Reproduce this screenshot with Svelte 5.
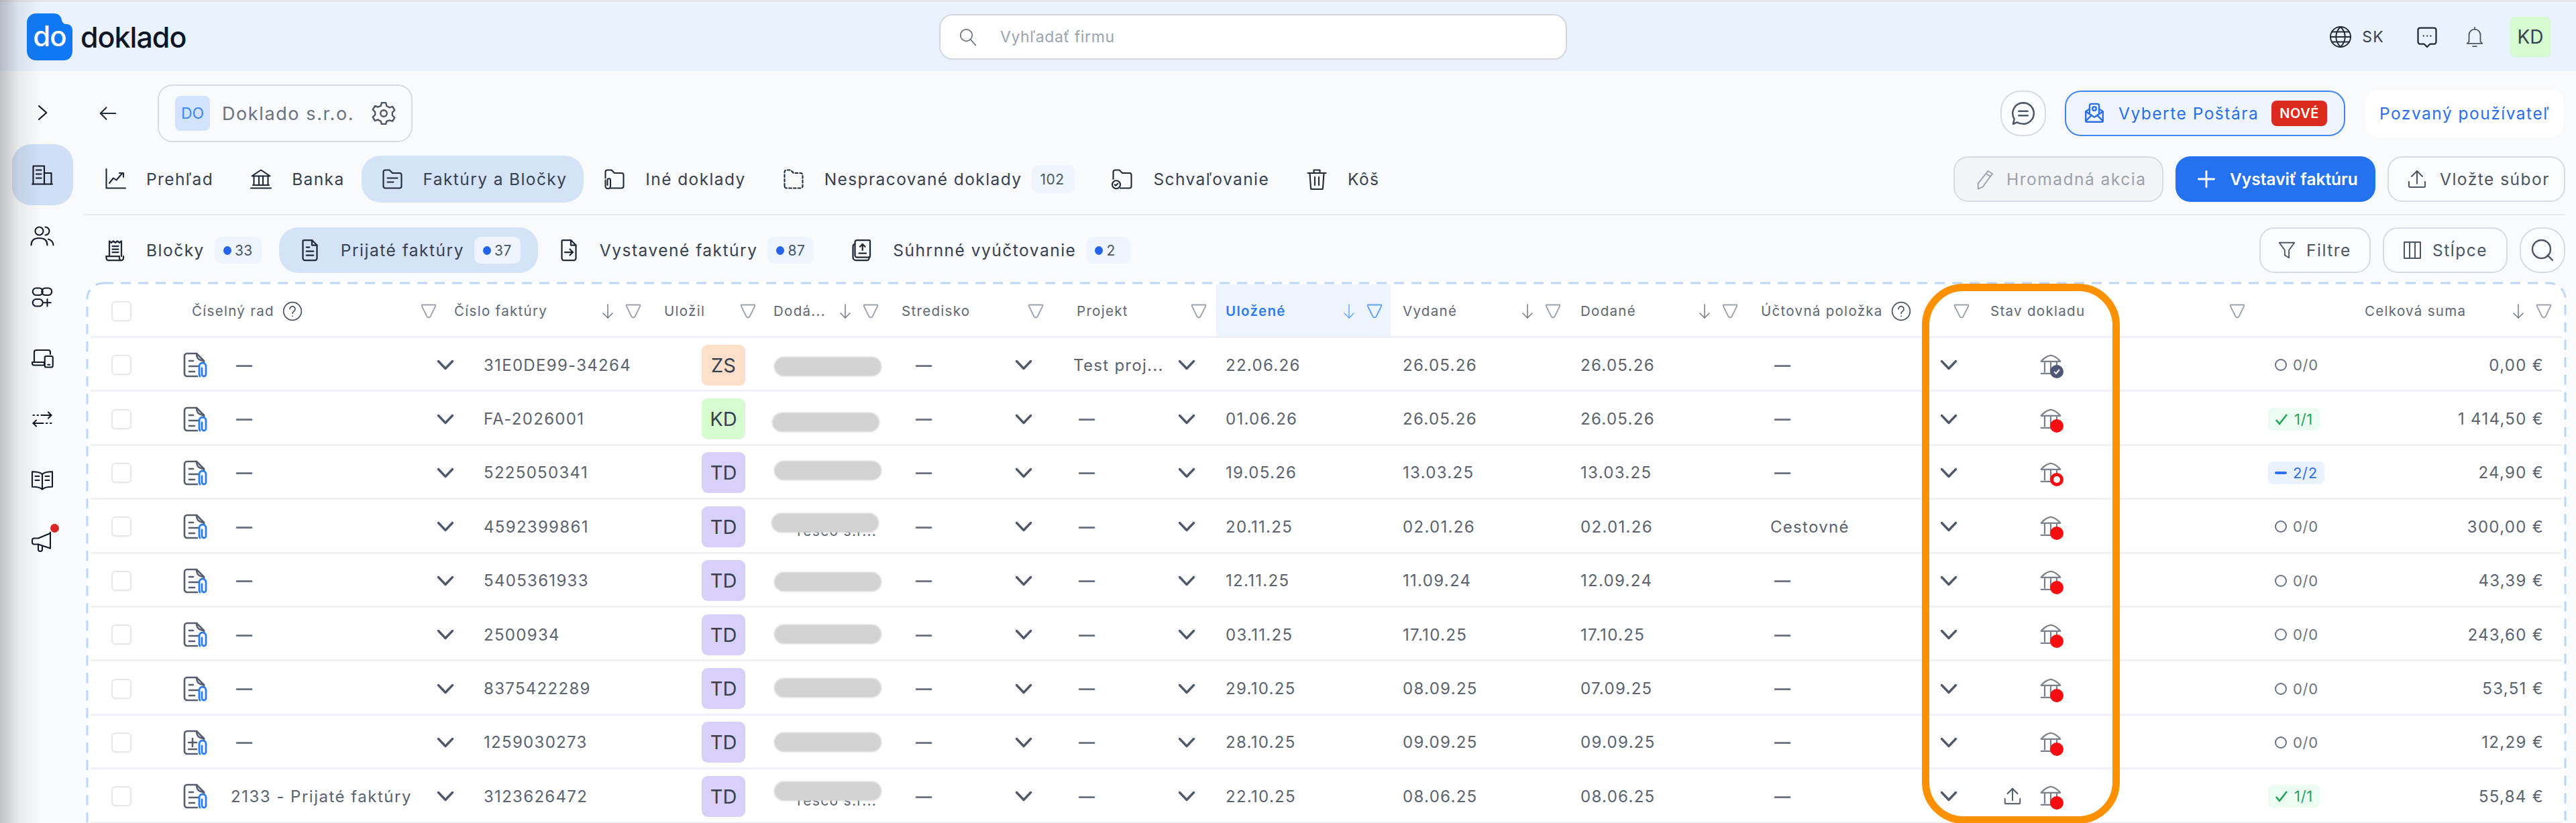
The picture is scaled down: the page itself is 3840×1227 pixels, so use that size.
<script>
  const ICONS = {
    chevronRight: ["M8 4l9 8-9 8"],
    arrowLeft: ["M21 12H3", "M10 5l-7 7 7 7"],
    building: ["M3 21V3h11v18", "M14 10h7v11", "M2 21h20", "M6 7h5", "M6 11h5", "M6 15h5"],
    users: ["M5 7a4 4 0 1 0 8 0a4 4 0 1 0-8 0", "M1 21c0-5 3-7 8-7s8 2 8 7", "M15 3a4 4 0 0 1 0 8", "M18 15c3 1 5 3 5 6"],
    apps: ["M6 3h3a3.500 3.500 0 0 1 0 7H6a3.500 3.500 0 0 1 0-7z", "M15 3h3a3.500 3.500 0 0 1 0 7h-3a3.500 3.500 0 0 1 0-7z", "M6 14h3a3.500 3.500 0 0 1 0 7H6a3.500 3.500 0 0 1 0-7z", "M17 14v7", "M13.500 17.500h7"],
    devices: ["M4 16V6a2 2 0 0 1 2-2h12a2 2 0 0 1 2 2v2", "M2 16h12v3H4a2 2 0 0 1-2-2z", "M16 10h5a1.500 1.500 0 0 1 1.500 1.500v8a1.500 1.500 0 0 1-1.500 1.500h-5a1.500 1.500 0 0 1-1.500-1.500v-8a1.500 1.500 0 0 1 1.500-1.500z", "M17.500 18.500h2"],
    swap: ["M3 8h1", "M7 8h1", "M11 8h10", "M18 5l3 3-3 3", "M3 16h10", "M6 13l-3 3 3 3", "M16 16h1", "M20 16h1"],
    book: ["M12 6C10 4 6 3.500 2 3.500v15c4 0 8 .5 10 2.500 2-2 6-2.500 10-2.500v-15C18 3.500 14 4 12 6z", "M12 6v15", "M5 8h4", "M5 12h4", "M15 8h4", "M15 12h4"],
    mega: ["M20 3v16", "M20 4L8 9H4a2 2 0 0 0-2 2v2a2 2 0 0 0 2 2h4l12 4", "M8 15v5a2 2 0 0 0 4 0v-3.500"],
    chart: ["M3 2v19h19", "M6 16l4-5 3 2 6-7", "M16 6h4v4"],
    bank: ["M3 9l9-6 9 6z", "M5 9v9", "M10 9v9", "M14 9v9", "M19 9v9", "M4 18h16", "M2 21h20"],
    bankDome: ["M2.500 8.500C5 5.500 9 3 12 2.500c3 .5 7 3 9.500 6z", "M6 9v10", "M12 9v10", "M18 9v10", "M2.500 20.500h19"],
    folderDoc: ["M3 5a2 2 0 0 1 2-2h4l3 3h7a2 2 0 0 1 2 2v11a2 2 0 0 1-2 2H5a2 2 0 0 1-2-2z", "M7 11h10", "M7 15h6"],
    folderClip: ["M8 21h11a2 2 0 0 0 2-2V8a2 2 0 0 0-2-2h-7L9 3H5a2 2 0 0 0-2 2v6", "M3 13v6a2.500 2.500 0 0 0 5 0v-6a1.500 1.500 0 0 0-3 0v5"],
    folderDash: ["M3 19V5a2 2 0 0 1 2-2h4l3 3h7a2 2 0 0 1 2 2v11a2 2 0 0 1-2 2H5a2 2 0 0 1-2-2z"],
    folderCheck: ["M10 21h9a2 2 0 0 0 2-2V8a2 2 0 0 0-2-2h-7L9 3H5a2 2 0 0 0-2 2v7", "M2 17.500a4 4 0 1 0 8 0a4 4 0 1 0-8 0", "M4.500 17.500l1 1 2-2"],
    trash: ["M3 6h18", "M9 6V3h6v3", "M5 6l1 15a1 1 0 0 0 1 1h10a1 1 0 0 0 1-1l1-15", "M10 10v8", "M14 10v8"],
    receipt: ["M6 18V3l2 1.500L10 3l2 1.500L14 3l2 1.500L18 3v15", "M3 18h13v2a2 2 0 0 0 4 0V18", "M5 22h13", "M3 18v2a2 2 0 0 0 2 2", "M9 8h6", "M9 11h6", "M9 14h6"],
    docLines: ["M6 2h8l5 5v13a2 2 0 0 1-2 2H7a2 2 0 0 1-2-2V3a1 1 0 0 1 1-1z", "M14 2v5h5", "M8.500 9h3", "M8.500 13h7", "M8.500 17h7"],
    docArrow: ["M6 2h8l5 5v13a2 2 0 0 1-2 2H7a2 2 0 0 1-2-2V3a1 1 0 0 1 1-1z", "M14 2v5h5", "M8 14h8", "M13 11l3 3-3 3"],
    summary: ["M7 2h12a1 1 0 0 1 1 1v15a1 1 0 0 1-1 1H7a2 2 0 0 1-2-2V4a2 2 0 0 1 2-2z", "M5 6a2 2 0 0 0-2 2v11a3 3 0 0 0 3 3h11a2 2 0 0 0 2-2v-1", "M12.500 12V6", "M10 8.500l2.500-2.500 2.500 2.500", "M9 15h7"],
    search: ["M3 10a7 7 0 1 0 14 0a7 7 0 1 0-14 0", "M15 15l6 7"],
    searchWide: ["M2 11a9 9 0 1 0 18 0a9 9 0 1 0-18 0", "M17 17l5 5"],
    gear: ["M10 2h4l.7 3 2.600 1.500 3-.9 2 3.400-2.200 2.100v2.800l2.200 2.100-2 3.400-3-.9L14.700 19.500 14 22h-4l-.7-2.500-2.600-1.500-3 .9-2-3.400 2.200-2.100v-2.800L1.700 8.500l2-3.400 3 .9L9.300 5z", "M9 12a3 3 0 1 0 6 0a3 3 0 1 0-6 0"],
    globe: ["M2 12a10 10 0 1 0 20 0a10 10 0 1 0-20 0", "M2 12h20", "M3.500 7h17", "M3.500 17h17", "M12 2c-6 6-6 14 0 20", "M12 2c6 6 6 14 0 20"],
    chatDots: ["M5 3h14a2 2 0 0 1 2 2v12a2 2 0 0 1-2 2h-4l-3 3-3-3H5a2 2 0 0 1-2-2V5a2 2 0 0 1 2-2z", "M8.500 11h.1", "M12 11h.1", "M15.500 11h.1"],
    bell: ["M6 17V10a6 6 0 0 1 12 0v7l2 2H4z", "M10 22h4", "M12 2v2"],
    comment: ["M12 2.500a9.500 9.500 0 0 1 0 19c-2 0-4-.5-5.500-1.500L3 21.500l1-4.500A9.500 9.500 0 0 1 12 2.500z", "M8 10h8", "M8 14h8"],
    mail: ["M3 10v10a1 1 0 0 0 1 1h16a1 1 0 0 0 1-1V10l-3-2", "M6 8l-3 2 9 6 9-6", "M3 20l6-6", "M21 20l-6-6", "M7 12V4a2 2 0 0 1 2-2h6a2 2 0 0 1 2 2v8", "M10 7a2 2 0 1 0 4 0a2 2 0 1 0-4 0"],
    pencil: ["M16 3l5 3-11 15-5 2 0-6z", "M14 6l5 3"],
    plus: ["M12 2v20", "M2 12h20"],
    upload: ["M12 17V3", "M6 9l6-6 6 6", "M3 15v5a1 1 0 0 0 1 1h16a1 1 0 0 0 1-1v-5"],
    funnel: ["M3 3h18l-6.500 9v9l-5-3v-6z"],
    columns: ["M3 3h18v18H3z", "M9 3v18", "M15 3v18"],
    sort: ["M12 2v20", "M5 15l7 7 7-7"],
    help: ["M2 12a10 10 0 1 0 20 0a10 10 0 1 0-20 0", "M9 9.500a3 3 0 1 1 4.500 2.600c-1 .6-1.500 1.200-1.500 2.400", "M12 17.500h.1"]
  };

  const sideItems = ["building", "users", "apps", "devices", "swap", "book", "mega"];

  const navItems = [
    { icon: "chart", label: "Prehľad" },
    { icon: "bank", label: "Banka" },
    { icon: "folderDoc", label: "Faktúry a Bločky", active: true },
    { icon: "folderClip", label: "Iné doklady" },
    { icon: "folderDash", label: "Nespracované doklady", count: "102" },
    { icon: "folderCheck", label: "Schvaľovanie" },
    { icon: "trash", label: "Kôš" }
  ];

  const tabs = [
    { icon: "receipt", label: "Bločky", count: "33" },
    { icon: "docLines", label: "Prijaté faktúry", count: "37", active: true },
    { icon: "docArrow", label: "Vystavené faktúry", count: "87" },
    { icon: "summary", label: "Súhrnné vyúčtovanie", count: "2" }
  ];

  const heads = [
    { check: true, pl: 31 },
    { label: "Číselný rad", help: true, filter: true, pr: 26 },
    { label: "Číslo faktúry", sort: true, filter: true, pr: 34 },
    { label: "Uložil", filter: true, pr: 26 },
    { label: "Dodá...", sort: true, filter: true, pr: 34 },
    { label: "Stredisko", filter: true, pr: 49 },
    { label: "Projekt", filter: true, pr: 14 },
    { label: "Uložené", sort: true, filter: true, pr: 12, pl: 14, on: true },
    { label: "Vydané", sort: true, filter: true, pr: 29, pl: 18 },
    { label: "Dodané", sort: true, filter: true, pr: 34 },
    { label: "Účtovná položka", help: true },
    { label: "Stav dokladu", filterFirst: true },
    { filterFirst: true },
    { label: "Celková suma", sort: true, filter: true, pr: 15 }
  ];

  const rows = [
    { no: "31E0DE99-34264", by: "ZS", pill: [0, 2], project: "Test proj...", saved: "22.06.26", issued: "26.05.26", due: "26.05.26", state: "check", pay: "0/0", sum: "0,00 €" },
    { no: "FA-2026001", by: "KD", pill: [-3, 5], saved: "01.06.26", issued: "26.05.26", due: "26.05.26", state: "dot", pay: "1/1", sum: "1 414,50 €" },
    { no: "5225050341", by: "TD", pill: [0, -3], saved: "19.05.26", issued: "13.03.25", due: "13.03.25", state: "ring", pay: "2/2", sum: "24,90 €" },
    { no: "4592399861", by: "TD", pill: [-4, -6], under: true, saved: "20.11.25", issued: "02.01.26", due: "02.01.26", item: "Cestovné", state: "dot", pay: "0/0", sum: "300,00 €" },
    { no: "5405361933", by: "TD", pill: [0, 2], saved: "12.11.25", issued: "11.09.24", due: "12.09.24", state: "dot", pay: "0/0", sum: "43,39 €" },
    { no: "2500934", by: "TD", pill: [0, -1], saved: "03.11.25", issued: "17.10.25", due: "17.10.25", state: "dot", pay: "0/0", sum: "243,60 €" },
    { no: "8375422289", by: "TD", pill: [0, -1], saved: "29.10.25", issued: "08.09.25", due: "07.09.25", state: "dot", pay: "0/0", sum: "53,51 €" },
    { no: "1259030273", by: "TD", pill: [0, 0], plusDoc: true, saved: "28.10.25", issued: "09.09.25", due: "09.09.25", state: "dot", pay: "0/0", sum: "12,29 €" },
    { no: "3123626472", by: "TD", pill: [0, -8], under: true, seq: "2133 - Prijaté faktúry", saved: "22.10.25", issued: "08.06.25", due: "08.06.25", upload: true, state: "dot", pay: "1/1", sum: "55,84 €" }
  ];
</script>

{#snippet icon(name, size = 24, width = 1.5)}
  <svg class="icon" width={size} height={size} viewBox="0 0 24 24" fill="none" stroke="currentColor" stroke-width={width} stroke-linecap="round" stroke-linejoin="round" stroke-dasharray={name === "folderDash" ? "2.5 2" : undefined}>
    {#each ICONS[name] as d}<path {d} />{/each}
  </svg>
{/snippet}

{#snippet chevron()}
  <svg class="chev" width="26" height="16" viewBox="0 0 26 16" fill="none" stroke="currentColor" stroke-width="3.400" stroke-linecap="round" stroke-linejoin="round"><path d="M2.500 2.500L13 13.500 23.500 2.500" /></svg>
{/snippet}

{#snippet docIcon(plus)}
  <svg class="doc" width="36" height="38" viewBox="0 0 36 38" fill="none" stroke-linecap="round" stroke-linejoin="round">
    <g stroke="#565d6d" stroke-width="2.600">
      <path d="M21 36H6a4 4 0 0 1-4-4V6a4 4 0 0 1 4-4h14l11 11v3" />
      <path d="M20 2c0 5 1 10 11 11" />
      {#if plus}
        <path d="M14 13v12M8 19h12M8 29h12" />
      {:else}
        <path d="M9 13h6M9 21h13M9 29h8" />
      {/if}
    </g>
    <path d="M26 23v9a3 3 0 0 0 6 0v-12a5 5 0 0 0-10 0v12a8 8 0 0 0 1 3" stroke="#2b7bf2" stroke-width="2.800" transform="translate(2 1)" />
  </svg>
{/snippet}

{#snippet funnel(on)}
  <span class="funnel" class:on>
    <svg width="24" height="24" viewBox="0 0 24 24" fill="none" stroke="currentColor" stroke-width="1.800" stroke-linejoin="round"><path d="M2.500 2.500h19c1 0 1 1 .6 2L15 19c-1 3-5 3-6 0L1.900 4.500c-.4-1 -.4-2 .6-2z" /></svg>
  </span>
{/snippet}

<div class="app">
  <header class="topbar">
    <div class="brand">
      <svg width="68" height="70" viewBox="0 0 68 70">
        <path d="M14 0h26c7 0 11 4 12 10 1 4 4 6 7 6 6 0 9 4 9 10v30c0 8-5 14-13 14H14C6 70 0 64 0 56V14C0 6 6 0 14 0z" fill="#0f78f4" />
        <text x="34" y="49" text-anchor="middle" class="logomark">do</text>
      </svg>
      <span class="wordmark">doklado</span>
    </div>
    <div class="searchbox">
      {@render icon("search", 30, 1.4)}
      <span>Vyhľadať firmu</span>
    </div>
    <div class="usermenu">
      <span class="lang">{@render icon("globe", 36, 1.3)}<b>SK</b></span>
      <span class="tool">{@render icon("chatDots", 36, 1.5)}</span>
      <span class="tool bell">{@render icon("bell", 34, 1.3)}</span>
      <span class="me">KD</span>
    </div>
  </header>

  <div class="shell">
    <nav class="sidebar">
      <span class="toggle">{@render icon("chevronRight", 30, 1.8)}</span>
      {#each sideItems as name, i}
        <span class="sideitem" class:active={i === 0}>
          {@render icon(name, 36, 1.4)}
          {#if name === "mega"}<i class="alert"></i>{/if}
        </span>
      {/each}
    </nav>

    <main class="content">
      <div class="firmrow">
        <span class="back">{@render icon("arrowLeft", 30, 1.6)}</span>
        <div class="firm">
          <span class="firmlogo">DO</span>
          <span class="firmname">Doklado s.r.o.</span>
          {@render icon("gear", 38, 1.5)}
        </div>
        <div class="firmactions">
          <button class="ghost round">{@render icon("comment", 40, 1.5)}</button>
          <button class="postar">{@render icon("mail", 34, 1.7)}<span>Vyberte Poštára</span><em>NOVÉ</em></button>
          <button class="invite">Pozvaný používateľ</button>
        </div>
      </div>

      <div class="navrow">
        {#each navItems as item}
          <span class="navitem" class:active={item.active}>
            {@render icon(item.icon, 36, 1.4)}
            <span>{item.label}</span>
            {#if item.count}<b class="count plain">{item.count}</b>{/if}
          </span>
        {/each}
        <div class="navactions">
          <button class="ghost bulk">{@render icon("pencil", 32, 1.4)}<span>Hromadná akcia</span></button>
          <button class="primary">{@render icon("plus", 28, 2.4)}<span>Vystaviť faktúru</span></button>
          <button class="ghost upfile">{@render icon("upload", 32, 1.5)}<span>Vložte súbor</span></button>
        </div>
      </div>

      <div class="divider"></div>

      <div class="tabrow">
        {#each tabs as tab}
          <span class="navitem" class:active={tab.active}>
            {@render icon(tab.icon, 36, 1.5)}
            <span>{tab.label}</span>
            <b class="count"><i></i>{tab.count}</b>
          </span>
        {/each}
        <div class="tabtools">
          <button class="ghost filters">{@render icon("funnel", 30, 1.5)}<span>Filtre</span></button>
          <button class="ghost cols">{@render icon("columns", 32, 1.5)}<span>Stĺpce</span></button>
          <button class="ghost round">{@render icon("searchWide", 36, 1.6)}</button>
        </div>
      </div>

      <section class="tablewrap">
        <svg class="dashes" width="3700" height="900" fill="none"><rect x="2" y="2" width="3694" height="1000" rx="24" stroke="#bcd6fb" stroke-width="3" stroke-dasharray="15 11" /></svg>
        <div class="thead">
          {#each heads as h}
            <div class="th" class:on={h.on} style="padding-right:{h.pr ?? 0}px;padding-left:{h.pl ?? 0}px">
              {#if h.check}<span class="box"></span>{/if}
              {#if h.filterFirst}<span class="first">{@render funnel()}</span>{/if}
              {#if h.label}<span class="thlabel">{h.label}</span>{/if}
              {#if h.help}<span class="help">{@render icon("help", 32, 1.3)}</span>{/if}
              {#if h.sort}<span class="sort">{@render icon("sort", 24, 1.4)}</span>{/if}
              {#if h.filter}<span class={h.sort ? "afterSort" : "push"}>{@render funnel(h.on)}</span>{/if}
            </div>
          {/each}
        </div>

        {#each rows as r}
          <div class="row">
            <div class="cell"><span class="box"></span></div>
            <div class="cell">
              {@render docIcon(r.plusDoc)}
              {#if r.seq}<span class="seq">{r.seq}</span>{:else}<span class="dash seqdash">—</span>{/if}
            </div>
            <div class="cell">{@render chevron()}<span class="no">{r.no}</span></div>
            <div class="cell">
              <span class="who {r.by}">{r.by}</span>
              <span class="supplier">
                {#if r.under}<span class="hidden">Tesco s.r...</span>{/if}
                <i class="pill" style="transform:translate({r.pill[0]}px,{r.pill[1]}px)"></i>
              </span>
            </div>
            <div class="cell"><span class="dash">—</span></div>
            <div class="cell">
              {@render chevron()}
              {#if r.project}<span class="project">{r.project}</span>{:else}<span class="dash projdash">—</span>{/if}
            </div>
            <div class="cell">{@render chevron()}<span class="saved">{r.saved}</span></div>
            <div class="cell">{r.issued}</div>
            <div class="cell">{r.due}</div>
            <div class="cell">{#if r.item}{r.item}{:else}<span class="dash itemdash">—</span>{/if}</div>
            <div class="cell">
              {@render chevron()}
              {#if r.upload}<span class="up">{@render icon("upload", 30, 1.5)}</span>{/if}
            </div>
            <div class="cell">
              <span class="bankstate">
                {@render icon("bankDome", 36, 1.5)}
                <i class={r.state}>
                  {#if r.state === "check"}
                    <svg width="12" height="12" viewBox="0 0 12 12" fill="none" stroke="#fff" stroke-width="2"><path d="M2 6l3 3 5-6" /></svg>
                  {/if}
                </i>
              </span>
            </div>
            <div class="cell">
              <span class="pay" class:ok={r.pay === "1/1"} class:part={r.pay === "2/2"}>
                {#if r.pay === "1/1"}
                  <svg width="20" height="20" viewBox="0 0 20 20" fill="none" stroke="currentColor" stroke-width="2.600"><path d="M2 11l5 6L18 3" /></svg>
                {:else if r.pay === "2/2"}
                  <i class="paydash"></i>
                {:else}
                  <i class="payring"></i>
                {/if}
                {r.pay}
              </span>
            </div>
            <div class="cell sum">{r.sum}</div>
          </div>
        {/each}

        <div class="highlight"></div>
      </section>
    </main>
  </div>
  <div class="edgeshade"></div>
</div>

<style>
  :global(body) {
    margin: 0;
    background: #f9fafc;
    font-family: Inter, "Noto Sans", sans-serif;
    color: #4b5563;
  }
  button {
    font: inherit;
    letter-spacing: inherit;
    cursor: pointer;
  }
  i,
  em {
    font-style: normal;
  }
  .icon {
    flex: none;
    display: block;
  }
  .app {
    position: relative;
    width: 3840px;
    height: 1227px;
    overflow: hidden;
    font-size: 24.500px;
    letter-spacing: 1.500px;
  }
  .edgeshade {
    position: absolute;
    left: 0;
    top: 0;
    width: 62px;
    height: 100%;
    background: linear-gradient(90deg, rgba(90, 92, 98, 0.36), rgba(90, 92, 98, 0.1) 45%, rgba(90, 92, 98, 0));
    pointer-events: none;
  }

  /* header */
  .topbar {
    height: 106px;
    box-sizing: border-box;
    border-top: 3px solid #e3e6ea;
    background: #e9f2fd;
    display: grid;
    grid-template-columns: 1400px 936px 1fr;
    align-items: center;
  }
  .brand {
    display: flex;
    align-items: center;
    gap: 12px;
    padding-left: 40px;
  }
  .logomark {
    font-size: 42px;
    font-weight: 500;
    letter-spacing: -1px;
    fill: #fff;
  }
  .wordmark {
    font-size: 43px;
    font-weight: 500;
    letter-spacing: -1px;
    color: #0e1526;
  }
  .searchbox {
    height: 68px;
    box-sizing: border-box;
    background: #fff;
    border: 2px solid #d3d8df;
    border-radius: 20px;
    display: flex;
    align-items: center;
    gap: 33px;
    padding-left: 26px;
    color: #6b7280;
    font-size: 23px;
    letter-spacing: 0.600px;
  }
  .searchbox span {
    color: #9aa3b2;
  }
  .usermenu {
    display: flex;
    align-items: center;
    justify-content: flex-end;
    padding-right: 38px;
    color: #1f2937;
  }
  .lang {
    display: flex;
    align-items: center;
    gap: 14px;
  }
  .lang b {
    font-weight: 400;
    font-size: 23px;
    letter-spacing: 1.300px;
    color: #374151;
  }
  .tool {
    margin-left: 46px;
  }
  .bell {
    margin-left: 36px;
    color: #4b5563;
  }
  .me {
    margin-left: 36px;
    width: 60px;
    height: 60px;
    border-radius: 6px;
    background: #d6fbd0;
    display: grid;
    place-items: center;
    font-size: 28px;
    letter-spacing: 0;
    color: #374151;
  }

  /* sidebar */
  .shell {
    display: flex;
    height: 1121px;
  }
  .sidebar {
    width: 126px;
    flex: none;
    display: flex;
    flex-direction: column;
    align-items: center;
    color: #111827;
    padding-top: 47px;
  }
  .toggle {
    height: 62px;
  }
  .sideitem {
    position: relative;
    width: 91px;
    height: 91px;
    flex: none;
    display: grid;
    place-items: center;
    border-radius: 28px;
  }
  .sideitem.active {
    background: #d0dff6;
  }
  .alert {
    position: absolute;
    right: 21px;
    top: 20px;
    width: 13px;
    height: 13px;
    border-radius: 50%;
    background: #dc2626;
  }

  /* toolbars */
  .content {
    flex: 1;
    min-width: 0;
    padding: 20px 16px 0 0;
    overflow: hidden;
  }
  .firmrow {
    height: 86px;
    display: flex;
    align-items: center;
    padding-left: 20px;
  }
  .back {
    color: #1f2937;
    margin-right: 59px;
  }
  .firm {
    width: 380px;
    height: 86px;
    box-sizing: border-box;
    border: 2px solid #d8dbe1;
    border-radius: 22px;
    display: flex;
    align-items: center;
    padding-left: 24px;
    gap: 18px;
    font-size: 27px;
    color: #6b7280;
  }
  .firm .icon {
    color: #4b5563;
    margin-left: -2px;
  }
  .firmlogo {
    width: 52px;
    height: 52px;
    border-radius: 8px;
    background: #d2e4fd;
    color: #3f86ee;
    display: grid;
    place-items: center;
    font-size: 23px;
    letter-spacing: 0;
  }
  .firmname {
    width: 206px;
    white-space: nowrap;
    letter-spacing: 1.600px;
  }
  .firmactions {
    margin-left: auto;
    display: flex;
    align-items: center;
    gap: 30px;
  }
  .firmactions .round {
    margin-right: -2px;
  }
  .ghost {
    height: 68px;
    box-sizing: border-box;
    border: 2px solid #d8dbe1;
    border-radius: 22px;
    background: #fbfcfd;
    color: #4b5563;
    display: flex;
    align-items: center;
    padding: 0;
  }
  .round {
    width: 68px;
    justify-content: center;
    border-radius: 30px;
  }
  .postar {
    width: 418px;
    height: 68px;
    box-sizing: border-box;
    border: 2px solid #3f86f0;
    border-radius: 24px;
    background: #eef5fe;
    color: #2b6fe8;
    display: flex;
    align-items: center;
    padding: 0 0 0 25px;
    gap: 19px;
    white-space: nowrap;
  }
  .postar em {
    margin-left: auto;
    margin-right: 25px;
    width: 86px;
    height: 38px;
    border-radius: 8px;
    background: #dc2a1e;
    color: #fff;
    display: grid;
    place-items: center;
    font-size: 20px;
    font-weight: 600;
    letter-spacing: 0.500px;
  }
  .invite {
    width: 296px;
    height: 72px;
    margin-right: 2px;
    border: 0;
    border-radius: 20px;
    background: #fff;
    color: #2b6fe8;
    padding: 0;
    white-space: nowrap;
  }
  .navrow {
    height: 70px;
    margin-top: 20px;
    display: flex;
    align-items: center;
    color: #374151;
  }
  .navitem {
    height: 100%;
    box-sizing: border-box;
    display: flex;
    align-items: center;
    gap: 28px;
    padding: 0 26px 0 28px;
    border-radius: 28px;
    white-space: nowrap;
  }
  .navrow .navitem {
    padding-right: 25px;
    letter-spacing: 1.400px;
  }
  .navitem.active {
    background: #d5e3f8;
  }
  .navitem .icon {
    color: #1f2937;
  }
  .count {
    margin-left: -13px;
    min-width: 40px;
    height: 40px;
    padding: 0 13px;
    border-radius: 10px;
    background: #eef5fe;
    display: flex;
    align-items: center;
    gap: 5px;
    font-weight: 400;
    font-size: 21px;
    letter-spacing: 0.500px;
    color: #4b5563;
  }
  .count i {
    width: 12px;
    height: 13px;
    border-radius: 50%;
    background: #2563eb;
  }
  .count.plain {
    height: 42px;
    padding: 0 12px;
  }
  .navactions,
  .tabtools {
    margin-left: auto;
    display: flex;
    align-items: center;
    gap: 18px;
  }
  .navactions button,
  .tabtools button {
    height: 68px;
  }
  .bulk {
    width: 313px;
    padding-left: 28px;
    gap: 17px;
    background: #f3f4f6;
    color: #9aa1ad;
    white-space: nowrap;
  }
  .primary {
    width: 298px;
    border: 0;
    border-radius: 22px;
    background: #2472f0;
    color: #fff;
    font-weight: 600;
    letter-spacing: 0;
    display: flex;
    align-items: center;
    padding: 0 0 0 32px;
    gap: 21px;
    white-space: nowrap;
  }
  .upfile {
    width: 265px;
    padding-left: 26px;
    gap: 18px;
    white-space: nowrap;
  }
  .divider {
    height: 2px;
    margin: 17px 0 18px;
    background: #eceef1;
  }
  .tabrow {
    height: 68px;
    display: flex;
    align-items: center;
    color: #374151;
    margin-bottom: 13px;
  }
  .filters {
    width: 166px;
    padding-left: 24px;
    gap: 14px;
  }
  .cols {
    width: 186px;
    padding-left: 26px;
    gap: 14px;
  }

  /* table */
  .tablewrap {
    position: relative;
    margin-left: 4px;
    padding: 0 5px;
    height: 807px;
    background: #fff;
    border-radius: 24px 24px 0 0;
    font-size: 24px;
    letter-spacing: 1.300px;
    color: #5b6270;
  }
  .dashes {
    position: absolute;
    left: -2px;
    top: 0;
  }
  .thead {
    display: grid;
    grid-template-columns: 151px 391px 313px 163px 191px 261px 208px 260px 283px 269px 287px 411px 202px 294px;
    height: 84px;
    border-bottom: 3px solid #f0f1f4;
    box-sizing: border-box;
    font-size: 20.500px;
    color: #5f6775;
  }
  .th {
    display: flex;
    align-items: center;
    min-width: 0;
    white-space: nowrap;
    padding-top: 6px;
  }
  .th.on {
    margin-top: 4px;
    padding-top: 2px;
    background: #edf4fe;
    color: #2f7df0;
    font-weight: 600;
  }
  .box {
    display: block;
    width: 30px;
    height: 30px;
    box-sizing: border-box;
    border: 2px solid #e6e8ec;
    border-radius: 6px;
    background: #fff;
    box-shadow: 0 1px 2px rgba(0, 0, 0, 0.05);
  }
  .help {
    margin-left: 11px;
    color: #4b5563;
  }
  .sort {
    margin-left: auto;
    color: #6b7280;
  }
  .th.on .sort,
  .funnel.on {
    color: #5ea2f7;
  }
  .afterSort {
    margin-left: 14px;
  }
  .push {
    margin-left: auto;
  }
  .first {
    margin-right: 31px;
  }
  .funnel {
    display: block;
    color: #9aa1ad;
  }
  .funnel svg {
    display: block;
  }
  .row {
    display: grid;
    grid-template-columns: 138px 378px 395px 319px 148px 243px 335px 265px 283px 253px 147px 342px 118px 320px;
    height: 80.400px;
    box-sizing: border-box;
    padding-top: 3px;
    border-bottom: 3px solid #f0f1f4;
  }
  .cell {
    display: flex;
    align-items: center;
    min-width: 0;
    white-space: nowrap;
  }
  .cell:first-child {
    padding-left: 31px;
  }
  .chev {
    flex: none;
    color: #4f586b;
  }
  .dash {
    font-weight: 700;
    color: #6b7280;
    letter-spacing: 0;
  }
  .seqdash {
    margin-left: 43px;
  }
  .seq {
    margin-left: 35px;
    letter-spacing: 1.500px;
  }
  .no {
    margin-left: 44px;
  }
  .who {
    width: 65px;
    height: 61px;
    flex: none;
    border-radius: 9px;
    display: grid;
    place-items: center;
    font-size: 29px;
    letter-spacing: 0;
    color: #374151;
  }
  .ZS {
    background: #fedfc9;
  }
  .KD {
    background: #d6fbd0;
  }
  .TD {
    background: #d8d0f8;
  }
  .supplier {
    position: relative;
    margin-left: 43px;
    width: 160px;
    height: 29px;
  }
  .pill {
    position: absolute;
    inset: 0;
    border-radius: 15px;
    background: #d2d2d2;
    filter: blur(1px);
  }
  .hidden {
    position: absolute;
    left: 30px;
    top: 8px;
    font-size: 21px;
  }
  .projdash {
    margin-left: 69px;
  }
  .project {
    margin-left: 61px;
  }
  .saved {
    margin-left: 45px;
  }
  .itemdash {
    margin-left: 6px;
  }
  .up {
    margin-left: 67px;
    color: #4b5563;
  }
  .bankstate {
    position: relative;
    color: #7b808a;
    display: block;
    height: 36px;
  }
  .bankstate i {
    position: absolute;
    right: -1px;
    bottom: -2px;
    width: 20px;
    height: 20px;
    box-sizing: border-box;
    border-radius: 50%;
    display: grid;
    place-items: center;
  }
  .dot {
    background: #f60d12;
  }
  .ring {
    background: #fff;
    border: 5px solid #f60d12;
  }
  .check {
    background: #4d5673;
  }
  .pay {
    height: 34px;
    display: flex;
    align-items: center;
    gap: 9px;
    padding: 0 10px;
    border-radius: 8px;
    font-size: 22px;
    letter-spacing: 0.700px;
    color: #6b7280;
  }
  .pay.ok {
    background: #ebfbf1;
    color: #20a35a;
  }
  .pay.part {
    background: #e9f2fe;
    color: #2f6fed;
  }
  .paydash {
    width: 18px;
    height: 4px;
    border-radius: 2px;
    background: currentColor;
  }
  .payring {
    width: 18px;
    height: 18px;
    box-sizing: border-box;
    border: 2.500px solid #6b7280;
    border-radius: 50%;
  }
  .sum {
    justify-content: flex-end;
    padding-right: 27px;
  }
  .highlight {
    position: absolute;
    left: 2735px;
    top: 3px;
    width: 295px;
    height: 805px;
    box-sizing: border-box;
    border: 11px solid #ff9100;
    border-radius: 62px;
    pointer-events: none;
  }
</style>
